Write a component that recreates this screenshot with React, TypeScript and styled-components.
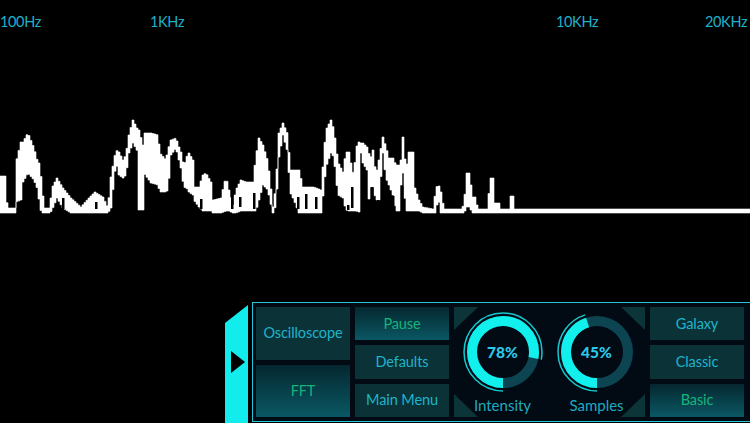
import React from 'react';
import styled, { createGlobalStyle } from 'styled-components';

const GlobalStyle = createGlobalStyle`
html, body {
  margin: 0;
  padding: 0;
  background: #000;
  overflow: hidden;
}
`;

const Screen = styled.div`
display: flex;
flex-direction: column;
width: 750px;
height: 423px;
background: #000;
font-family: Lato, "Open Sans", sans-serif;
`;

const Axis = styled.div`
display: grid;
grid-template-columns: 150px 406px 149px 1fr;
padding-top: 13px;
height: 17px;
`;

const AxisLabel = styled.span`
font-size: 14.5px;
line-height: 17px;
letter-spacing: -0.35px;
color: #1fb0cc;
white-space: nowrap;
`;

const Scope = styled.svg`
display: block;
margin-top: 80px;
filter: blur(0.45px);
`;

const Dock = styled.div`
display: flex;
align-self: flex-end;
gap: 4px;
margin-top: auto;
width: 525px;
height: 121px;
`;

const Tab = styled.div`
display: flex;
align-items: center;
justify-content: center;
align-self: flex-end;
width: 23px;
height: 118px;
padding-bottom: 4px;
box-sizing: border-box;
background: #12ecec;
clip-path: polygon(100% 0, 100% 100%, 0 100%, 0 18px);
`;

const Arrow = styled.div`
width: 0;
height: 0;
margin-left: 2px;
border-left: 14px solid #000;
border-top: 11px solid transparent;
border-bottom: 11px solid transparent;
`;

const Panel = styled.div`
display: flex;
gap: 5px;
flex: 1;
box-sizing: border-box;
height: 120px;
padding: 4px 3px 4px 3px;
border: 1px solid #23c6d8;
border-right: none;
background: #020a14;
`;

const Column = styled.div`
display: flex;
flex-direction: column;
gap: 5px;
width: 94px;
`;

const Button = styled.button<{ $active?: boolean }>`
flex: 1;
min-height: 0;
padding: 0 0 1px;
border: none;
font-family: inherit;
font-size: 14.5px;
letter-spacing: -0.1px;
white-space: nowrap;
color: ${(p) => (p.$active ? '#17b47a' : '#1fb4cc')};
background: ${(p) =>
  p.$active ? 'linear-gradient(180deg, #05272f 0%, #0a5864 100%)' : '#0a3237'};
`;

const GaugePanel = styled.div`
position: relative;
display: flex;
justify-content: center;
width: 191px;
`;

const Corner = styled.div<{ $corner: string }>`
position: absolute;
width: 24px;
height: 23px;
background: #0c3539;
${(p) => (p.$corner[0] === 't' ? 'top: 0;' : 'bottom: 0;')}
${(p) => (p.$corner[1] === 'l' ? 'left: 0;' : 'right: 0;')}
clip-path: ${(p) =>
  ({
    tl: 'polygon(0 0, 100% 0, 0 100%)',
    tr: 'polygon(0 0, 100% 0, 100% 100%)',
    bl: 'polygon(0 0, 100% 100%, 0 100%)',
    br: 'polygon(100% 0, 100% 100%, 0 100%)',
  }[p.$corner])};
`;

const Gauge = styled.div`
position: relative;
display: flex;
flex-direction: column;
align-items: center;
width: 94px;
padding-top: 3px;
`;

const Dial = styled.div`
position: relative;
width: 84px;
height: 84px;
`;

const DialValue = styled.span`
position: absolute;
inset: 0;
display: flex;
align-items: center;
justify-content: center;
font-size: 15.5px;
font-weight: 900;
color: #2bc8e8;
`;

const GaugeLabel = styled.span`
font-size: 15px;
line-height: 22px;
color: #1fa9bf;
`;

// [x, top, bottom] of the white trace
const trace: number[][] = [
  [0, 176, 213], [4, 176, 213], [5, 200, 213], [8, 208, 213], [14, 208, 213], [15, 163, 202],
  [20, 142, 200], [22, 142, 182], [27, 133, 173], [33, 148, 180], [37, 163, 190], [39, 163, 208],
  [41, 190, 213], [44, 208, 213], [49, 208, 213], [51, 188, 210], [56, 178, 198], [62, 188, 208],
  [70, 198, 213], [80, 207, 213], [88, 198, 213], [94, 192, 213], [102, 197, 213], [107, 208, 213],
  [110, 177, 208], [115, 150, 162], [118, 152, 175], [122, 160, 178], [125, 155, 175], [128, 135, 153],
  [132, 120, 143], [137, 130, 152], [138, 130, 210], [142, 145, 210], [143, 133, 173], [150, 133, 183],
  [157, 135, 185], [159, 153, 192], [165, 160, 192], [167, 150, 190], [170, 140, 155], [175, 138, 148],
  [178, 147, 160], [180, 152, 168], [183, 167, 188], [185, 158, 187], [188, 153, 192], [192, 160, 195],
  [193, 187, 200], [198, 187, 207], [202, 175, 211], [205, 173, 211], [210, 182, 211], [212, 200, 213],
  [220, 198, 213], [225, 177, 211], [228, 190, 211], [232, 205, 213], [235, 190, 213], [240, 180, 211],
  [245, 182, 211], [252, 182, 211], [255, 157, 211], [258, 138, 200], [262, 145, 185], [267, 162, 190],
  [269, 180, 200], [272, 207, 213], [275, 187, 205], [278, 133, 157], [282, 123, 135], [287, 135, 153],
  [289, 170, 192], [293, 170, 200], [298, 170, 213], [302, 187, 213], [313, 187, 213], [320, 190, 213],
  [322, 167, 196], [325, 130, 167], [330, 120, 153], [333, 130, 157], [337, 162, 195], [342, 172, 198],
  [345, 152, 210], [348, 152, 211], [350, 163, 211], [353, 177, 211], [355, 148, 211], [358, 142, 212],
  [360, 143, 153], [362, 143, 163], [366, 147, 170], [367, 147, 211], [369, 160, 187], [372, 150, 187],
  [375, 175, 200], [378, 160, 200], [382, 137, 153], [385, 147, 178], [388, 158, 185], [392, 158, 195],
  [395, 165, 211], [398, 165, 211], [400, 160, 185], [402, 137, 173], [405, 170, 211], [408, 152, 211],
  [412, 152, 211], [414, 188, 211], [418, 200, 211], [422, 207, 213], [432, 209, 213], [435, 190, 213],
  [437, 183, 197], [440, 192, 213], [443, 209, 213], [460, 209, 213], [463, 205, 213], [466, 173, 207],
  [469, 173, 207], [471, 197, 213], [474, 197, 213], [477, 209, 213], [487, 209, 213], [489, 178, 213],
  [492, 178, 213], [493, 203, 213], [498, 203, 213], [499, 209, 213], [509, 209, 213], [510, 196, 213],
  [513, 196, 213], [514, 209, 213], [750, 209, 213],
];

// black gaps inside the trace: [x, top, bottom]
const gaps: number[][] = [
  [62, 198, 209], [95, 202, 209], [200, 199, 209], [231, 193, 209], [239, 197, 207], [253, 193, 209],
  [297, 197, 209], [305, 194, 209], [315, 197, 209], [347, 205, 210], [351, 187, 208], [371, 187, 209],
  [377, 200, 209], [392, 196, 207], [401, 186, 209],
];

// interpolate the columns, then sample them in small steps so the trace stays blocky
const sampleTrace = (step: number) => {
  const columns: number[][] = [];
  let i = 0;
  for (let x = 0; x <= 750; x += step) {
    while (i < trace.length - 2 && trace[i + 1][0] < x) i++;
    const [x0, t0, b0] = trace[i];
    const [x1, t1, b1] = trace[i + 1];
    const k = Math.min(1, (x - x0) / (x1 - x0));
    columns.push([x, t0 + (t1 - t0) * k, b0 + (b1 - b0) * k]);
  }
  return columns;
};

const columns = sampleTrace(2);

const tracePoints = [
  ...columns.flatMap(([x, top]) => [`${x},${top.toFixed(1)}`, `${x + 2},${top.toFixed(1)}`]),
  ...[...columns].reverse().flatMap(([x, , bottom]) => [`${x + 2},${bottom.toFixed(1)}`, `${x},${bottom.toFixed(1)}`]),
].join(' ');

const RADIUS = 31;
const RING = 39;

const Arc = ({ r, value, width, color }: { r: number; value: number; width: number; color: string }) => {
  const length = 2 * Math.PI * r;
  return (
    <circle
      cx="42"
      cy="42"
      r={r}
      fill="none"
      stroke={color}
      strokeWidth={width}
      strokeDasharray={`${(length * value) / 100} ${length}`}
      transform="rotate(90 42 42)"
    />
  );
};

const GaugeDial = ({ value, label }: { value: number; label: string }) => (
  <Gauge>
    <Dial>
      <svg width="84" height="84" viewBox="0 0 84 84">
        <circle cx="42" cy="42" r={RADIUS} fill="none" stroke="#0d4452" strokeWidth="10" />
        <Arc r={RADIUS} value={value} width={10} color="#12f0ee" />
        <Arc r={RING} value={value} width={1.5} color="#16c8cf" />
      </svg>
      <DialValue>{value}%</DialValue>
    </Dial>
    <GaugeLabel>{label}</GaugeLabel>
  </Gauge>
);

const App = () => {
  return (
    <Screen>
      <GlobalStyle />
      <Axis>
        <AxisLabel>100Hz</AxisLabel>
        <AxisLabel>1KHz</AxisLabel>
        <AxisLabel>10KHz</AxisLabel>
        <AxisLabel>20KHz</AxisLabel>
      </Axis>
      <Scope width="750" height="110" viewBox="0 110 750 110">
        <polygon points={tracePoints} fill="#fff" stroke="#fff" strokeWidth="0.6" strokeLinejoin="round" />
        {gaps.map(([x, top, bottom]) => (
          <rect key={x} x={x} y={top} width="2.5" height={bottom - top} fill="#000" />
        ))}
      </Scope>
      <Dock>
        <Tab>
          <Arrow />
        </Tab>
        <Panel>
          <Column>
            <Button>Oscilloscope</Button>
            <Button $active>FFT</Button>
          </Column>
          <Column>
            <Button $active>Pause</Button>
            <Button>Defaults</Button>
            <Button>Main Menu</Button>
          </Column>
          <GaugePanel>
            <Corner $corner="tl" />
            <Corner $corner="tr" />
            <Corner $corner="bl" />
            <Corner $corner="br" />
            <GaugeDial value={78} label="Intensity" />
            <GaugeDial value={45} label="Samples" />
          </GaugePanel>
          <Column>
            <Button>Galaxy</Button>
            <Button>Classic</Button>
            <Button $active>Basic</Button>
          </Column>
        </Panel>
      </Dock>
    </Screen>
  );
};

export default App;
